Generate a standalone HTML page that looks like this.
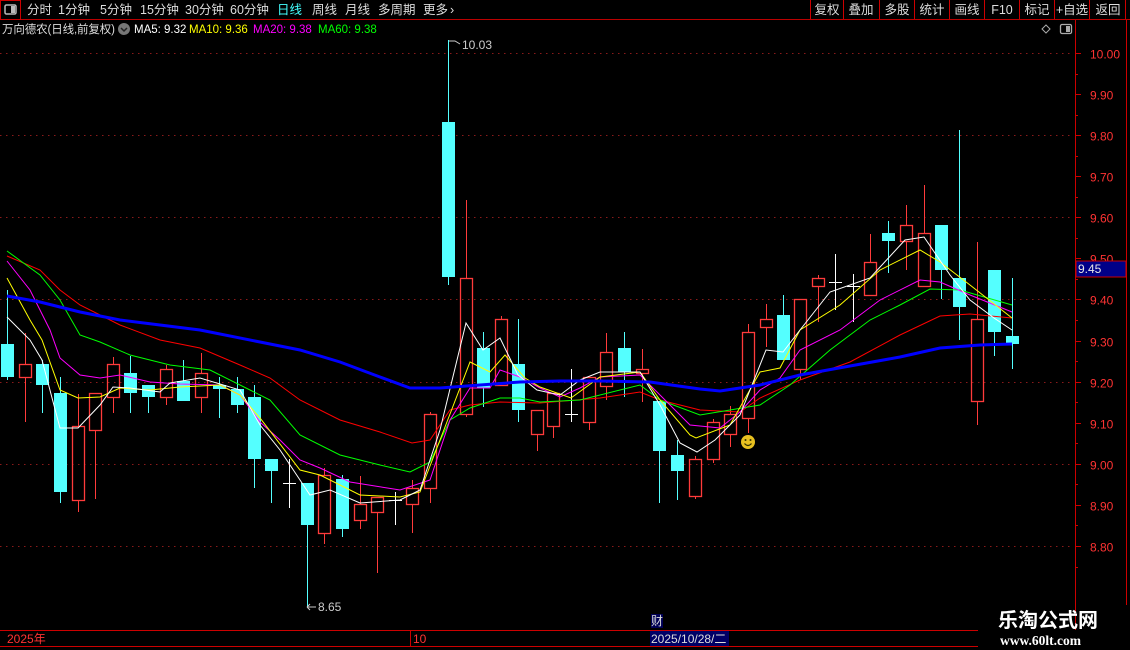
<!DOCTYPE html>
<html><head><meta charset="utf-8"><style>
html,body{margin:0;padding:0;background:#000;width:1130px;height:650px;overflow:hidden;font-family:"Liberation Sans","Noto Sans CJK SC",sans-serif}
svg{position:absolute;left:0;top:0}
</style></head><body>
<svg id="s" width="1130" height="650" xmlns="http://www.w3.org/2000/svg" font-family="Liberation Sans, Noto Sans CJK SC, sans-serif">
<rect width="1130" height="650" fill="#000"/>
<line x1="0" y1="19.5" x2="1130" y2="19.5" stroke="#b00" />
<rect x="0.5" y="0.5" width="20" height="19" fill="none" stroke="#c00"/>
<rect x="5" y="5" width="11" height="9" rx="1.5" fill="none" stroke="#bbb" stroke-width="1.5"/>
<rect x="11" y="6" width="4" height="7" fill="#bbb"/>
<g font-size="12.5" fill="#ddd">
<text x="27" y="14">分时</text><text x="58" y="14">1分钟</text><text x="100" y="14">5分钟</text><text x="140" y="14">15分钟</text><text x="185" y="14">30分钟</text><text x="230" y="14">60分钟</text>
<text x="277" y="14" fill="#4ff">日线</text><text x="312" y="14">周线</text><text x="345" y="14">月线</text><text x="378" y="14">多周期</text><text x="423" y="14">更多</text><text x="450" y="14">›</text>
</g>
<g stroke="#c00">
<line x1="810.5" y1="0" x2="810.5" y2="19"/><line x1="843.5" y1="0" x2="843.5" y2="19"/><line x1="879.5" y1="0" x2="879.5" y2="19"/><line x1="914.5" y1="0" x2="914.5" y2="19"/><line x1="949.5" y1="0" x2="949.5" y2="19"/><line x1="984.5" y1="0" x2="984.5" y2="19"/><line x1="1019.5" y1="0" x2="1019.5" y2="19"/><line x1="1054.5" y1="0" x2="1054.5" y2="19"/><line x1="1089.5" y1="0" x2="1089.5" y2="19"/><line x1="1125.5" y1="0" x2="1125.5" y2="19"/>
</g>
<g font-size="12.5" fill="#ddd" text-anchor="middle">
<text x="827" y="14">复权</text><text x="861" y="14">叠加</text><text x="897" y="14">多股</text><text x="932" y="14">统计</text><text x="967" y="14">画线</text><text x="1002" y="14">F10</text><text x="1037" y="14">标记</text><text x="1072" y="14">+自选</text><text x="1108" y="14">返回</text>
</g>
<g font-size="11.5">
<text x="2" y="33" fill="#ddd" textLength="113">万向德农(日线,前复权)</text>
<circle cx="124" cy="29" r="6" fill="#777"/><path d="M121 28 L124 31 L127 28" stroke="#222" stroke-width="1.5" fill="none"/>
<text x="134" y="33" fill="#fff">MA5: 9.32</text>
<text x="189" y="33" fill="#ff0">MA10: 9.36</text>
<text x="253" y="33" fill="#f0f">MA20: 9.38</text>
<text x="318" y="33" fill="#0f0">MA60: 9.38</text>
</g>
<path d="M1046 25 L1050 29 L1046 33 L1042 29 Z" fill="none" stroke="#aaa"/>
<rect x="1060.5" y="24.5" width="11" height="9" rx="1.5" fill="none" stroke="#aaa" stroke-width="1.3"/><rect x="1066" y="26" width="4" height="6" fill="#aaa"/>
<line x1="1075.5" y1="20" x2="1075.5" y2="630" stroke="#c00"/>
<line x1="1126.5" y1="20" x2="1126.5" y2="605" stroke="#c00"/>
<g id="grid" stroke="#8a1a1a" stroke-dasharray="1.5 4.5"></g>
<g id="axis" font-size="12" fill="#f33"></g>
<g id="c"></g>
<g id="ma" fill="none"></g>
<rect x="1076" y="261" width="50" height="16" fill="#008" stroke="#c00"/>
<text x="1078" y="273" font-size="12" fill="#e8e8e8">9.45</text>
<path d="M449 41 L455 41 L460 44" stroke="#ccc" fill="none"/><text x="462" y="49" font-size="12" fill="#ccc">10.03</text>
<path d="M307 607 L316 607 M307 607 L310 604 M307 607 L310 610" stroke="#ccc" fill="none"/><text x="318" y="611" font-size="12" fill="#ccc">8.65</text>
<circle cx="748" cy="442" r="7" fill="#e8c020"/><circle cx="745.5" cy="440" r="1" fill="#330"/><circle cx="750.5" cy="440" r="1" fill="#330"/><path d="M744.5 443.5 Q748 447.5 751.5 443.5" stroke="#330" fill="none" stroke-width="1.2"/>
<line x1="0" y1="630.5" x2="978" y2="630.5" stroke="#c00"/>
<line x1="0" y1="646.5" x2="978" y2="646.5" stroke="#c00"/>
<line x1="410.5" y1="630" x2="410.5" y2="646" stroke="#c00"/>
<text x="7" y="643" font-size="12" fill="#f33">2025年</text>
<text x="413" y="643" font-size="12" fill="#f33">10</text>
<rect x="650" y="631" width="79" height="15" fill="#006"/>
<text x="651" y="643" font-size="12" fill="#ddd">2025/10/28/二</text>
<rect x="651" y="614" width="12" height="14" fill="#005"/>
<text x="651" y="625" font-size="12" fill="#ddd">财</text>
<text x="998" y="627" font-size="20" font-weight="bold" fill="#fff">乐淘公式网</text>
<text x="1000" y="645" font-size="13.5" font-weight="bold" fill="#fff" font-family="Liberation Serif, serif">www.60lt.com</text>
</svg>
<script>
var NS="http://www.w3.org/2000/svg";
function el(t,a,p){var e=document.createElementNS(NS,t);for(var k in a)e.setAttribute(k,a[k]);document.getElementById(p).appendChild(e);return e;}
function Y(p){return 53+(10-p)*410.8;}
for(var i=0;i<=12;i++){var p=10-i*0.1,y=Math.round(Y(p))+0.5;
 if(i%2==0)el('line',{x1:0,y1:y,x2:1073,y2:y},'grid');
 el('line',{x1:1075,y1:y,x2:1081,y2:y,stroke:'#c00'},'axis');
 var t=el('text',{x:1090,y:y+5},'axis');t.textContent=p.toFixed(2);}
for(var i=0;i<13*2;i++){var y=Math.round(Y(10-i*0.05))+0.5;el('line',{x1:1075,y1:y,x2:1078,y2:y,stroke:'#c00'},'axis');}
var C=[[7,344,377,290,380,'d'],[25,364,377,333,422,'u'],[42,364,385,360,413,'d'],[60,393,492,377,503,'d'],[78,426,500,394,512,'u'],[95,393,430,393,499,'u'],[113,364,397,357,413,'u'],[130,373,393,356,413,'d'],[148,385,397,385,413,'d'],[166,369,397,365,405,'u'],[183,381,401,360,401,'d'],[201,373,397,353,413,'u'],[219,385,389,377,418,'d'],[237,389,405,377,413,'d'],[254,397,459,385,488,'d'],[271,459,471,459,503,'d'],[289,483,483,459,508,'x'],[307,483,525,483,607,'d'],[324,475,533,468,544,'u'],[342,479,529,475,537,'d'],[360,504,520,476,529,'u'],[377,497,512,497,573,'u'],[395,500,500,492,525,'x'],[412,488,504,480,533,'u'],[430,414,488,412,503,'u'],[448,122,277,40,285,'d'],[466,278,414,200,417,'u'],[483,348,388,332,407,'d'],[501,319,385,316,385,'u'],[518,364,410,319,422,'d'],[537,410,434,410,451,'u'],[553,393,426,393,438,'u'],[571,414,414,369,422,'x'],[589,377,422,377,430,'u'],[606,352,386,333,400,'u'],[624,348,372,332,397,'d'],[642,369,373,349,402,'u'],[659,401,451,401,503,'d'],[677,455,471,440,500,'d'],[695,459,496,456,499,'u'],[713,422,459,419,463,'u'],[730,414,434,406,447,'u'],[748,332,418,324,433,'u'],[766,319,327,304,347,'u'],[783,315,360,295,360,'d'],[800,299,369,299,380,'u'],[818,278,286,275,322,'u'],[835,282,282,254,310,'x'],[853,286,286,274,322,'x'],[870,262,295,234,295,'u'],[888,233,241,221,273,'d'],[906,225,241,205,270,'u'],[924,233,286,185,286,'u'],[941,225,270,225,299,'d'],[959,278,307,130,340,'d'],[977,319,401,242,425,'u'],[994,270,332,270,356,'d'],[1012,336,344,278,369,'d']];
C.forEach(function(c){var x=c[0]+0.5,col=c[5]=='d'?'#54ffff':(c[5]=='u'?'#ff3b3b':'#fff');
 if(c[5]=='u'){el('line',{x1:x,y1:c[3],x2:x,y2:c[1],stroke:col},'c');el('line',{x1:x,y1:c[2],x2:x,y2:c[4],stroke:col},'c');
  el('rect',{x:c[0]-5.5,y:c[1]+0.5,width:12,height:Math.max(c[2]-c[1],1),fill:'none',stroke:col,'stroke-width':1.3},'c');}
 else if(c[5]=='d'){el('line',{x1:x,y1:c[3],x2:x,y2:c[4],stroke:col},'c');el('rect',{x:c[0]-6,y:c[1],width:13,height:Math.max(c[2]-c[1],2),fill:col},'c');}
 else{el('line',{x1:x,y1:c[3],x2:x,y2:c[4],stroke:col},'c');el('line',{x1:c[0]-6,y1:c[1]+0.5,x2:c[0]+7,y2:c[1]+0.5,stroke:col},'c');}
});
var L={
'#f00':[[7,256],[40,270],[60,290],[80,305],[120,325],[160,340],[200,348],[240,365],[270,378],[300,400],[340,420],[380,432],[412,443],[430,440],[450,410],[470,405],[500,402],[540,403],[600,398],[640,392],[660,400],[700,410],[740,412],[760,398],[800,380],[850,362],[900,335],[940,316],[970,314],[1012,318]],
'#0f0':[[7,251],[40,275],[60,300],[80,335],[100,342],[130,355],[170,365],[210,370],[250,390],[270,400],[300,435],[340,455],[380,465],[410,472],[430,462],[450,420],[470,408],[500,398],[520,398],[540,402],[580,400],[640,385],[660,400],[700,415],[760,405],[790,385],[830,350],[870,320],[900,305],[930,289],[960,290],[1012,305]],
'#f0f':[[7,261],[30,290],[50,330],[60,358],[80,375],[100,378],[120,375],[150,382],[180,384],[220,385],[240,395],[260,422],[280,440],[300,460],[320,468],[350,482],[400,490],[430,480],[450,420],[470,388],[490,388],[500,370],[520,377],[540,388],[560,397],[580,388],[600,377],[640,375],[660,395],[690,425],[720,428],[740,412],[760,390],[780,378],[800,350],[840,330],[880,300],[920,280],[940,282],[970,295],[1012,312]],
'#ff0':[[7,278],[30,320],[42,340],[60,390],[78,398],[100,397],[120,388],[150,390],[180,387],[220,385],[240,395],[260,418],[300,470],[320,475],[360,495],[400,497],[420,492],[440,440],[470,362],[490,372],[505,355],[525,378],[540,387],[571,398],[600,377],[640,372],[660,400],[690,435],[696,438],[730,425],[760,372],[780,368],[800,330],[840,305],[880,270],[920,250],[940,262],[970,285],[1012,318]],
'#fff':[[7,317],[30,340],[42,360],[60,428],[78,428],[100,405],[113,387],[130,388],[160,392],[170,383],[200,378],[240,390],[260,425],[280,450],[300,480],[310,495],[330,490],[360,503],[400,500],[420,490],[440,430],[466,323],[483,350],[500,338],[518,375],[537,390],[560,395],[580,380],[600,372],[640,372],[660,405],[680,443],[697,452],[715,440],[740,415],[766,350],[783,352],[800,330],[830,292],[870,278],[905,240],[924,237],[950,275],[970,300],[994,318],[1012,330]]};
for(var k in L)el('polyline',{points:L[k].map(function(p){return p.join(',')}).join(' '),stroke:k,'stroke-width':1},'ma');
el('polyline',{points:[[7,296],[40,302],[80,312],[120,320],[160,325],[200,330],[260,342],[300,350],[340,362],[380,377],[410,388],[440,388],[480,385],[520,382],[560,381],[600,381],[650,382],[700,389],[720,391],[760,385],[800,375],[850,366],[900,357],[940,348],[980,345],[1012,344]].map(function(p){return p.join(',')}).join(' '),stroke:'#00f','stroke-width':3},'ma');
</script>
</body></html>
